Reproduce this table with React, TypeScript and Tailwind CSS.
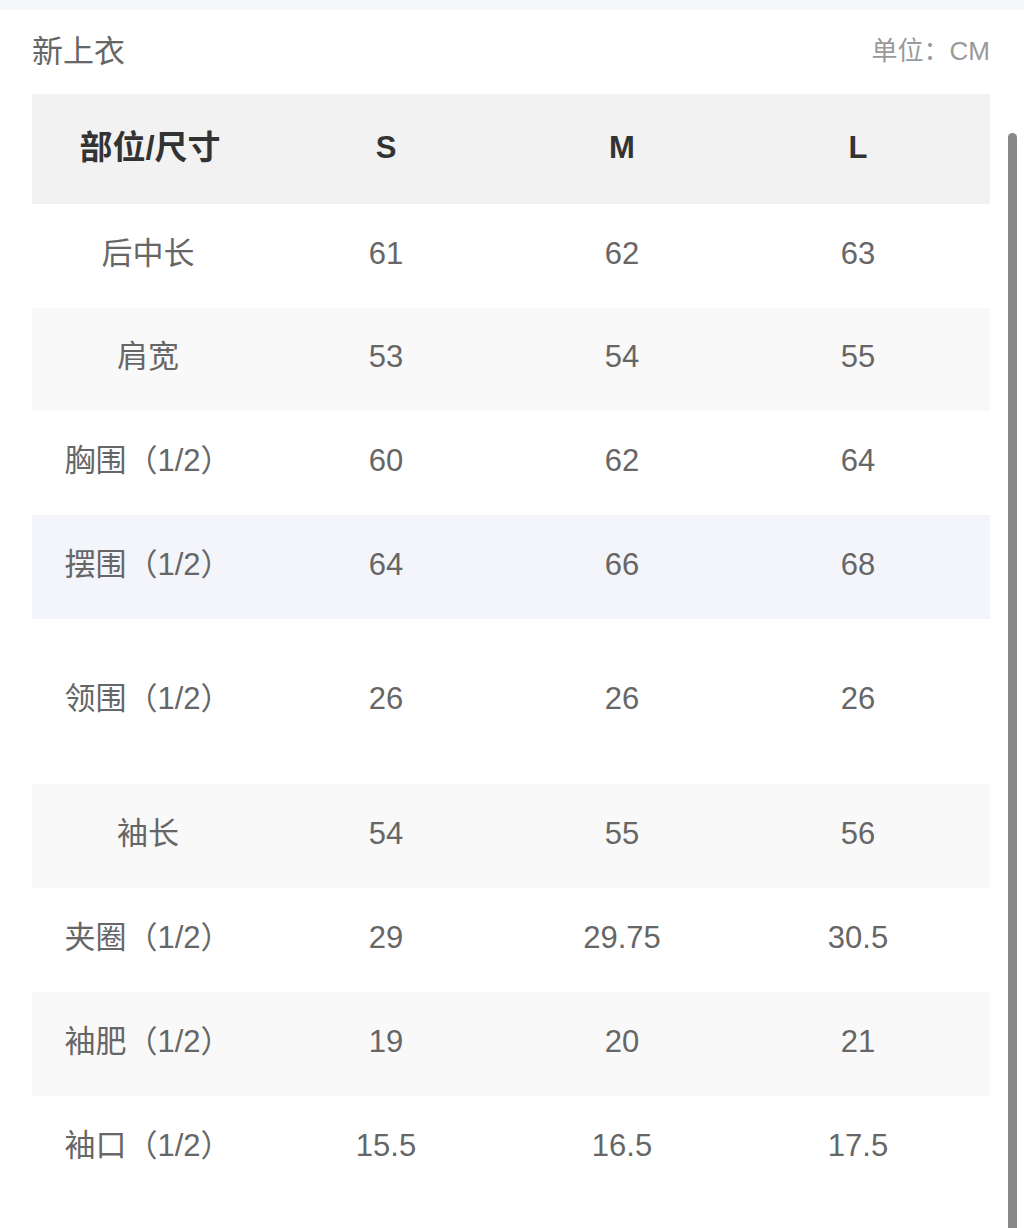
import React from "react";

const rows: { label: string; s: string; m: string; l: string; bg: string; h: string }[] = [
  { label: "后中长", s: "61", m: "62", l: "63", bg: "bg-white", h: "h-[104px]" },
  { label: "肩宽", s: "53", m: "54", l: "55", bg: "bg-[#f9f9f9]", h: "h-[103px]" },
  { label: "胸围（1/2）", s: "60", m: "62", l: "64", bg: "bg-white", h: "h-[104px]" },
  { label: "摆围（1/2）", s: "64", m: "66", l: "68", bg: "bg-[#f3f5fa]", h: "h-[104px]" },
  { label: "领围（1/2）", s: "26", m: "26", l: "26", bg: "bg-white", h: "h-[165px]" },
  { label: "袖长", s: "54", m: "55", l: "56", bg: "bg-[#f9f9f9]", h: "h-[104px]" },
  { label: "夹圈（1/2）", s: "29", m: "29.75", l: "30.5", bg: "bg-white", h: "h-[104px]" },
  { label: "袖肥（1/2）", s: "19", m: "20", l: "21", bg: "bg-[#f9f9f9]", h: "h-[104px]" },
  { label: "袖口（1/2）", s: "15.5", m: "16.5", l: "17.5", bg: "bg-white", h: "h-[104px]" },
];

const font = { fontFamily: '"Liberation Sans", "Noto Sans CJK SC", sans-serif' };

export default function App() {
  return (
    <div className="relative w-[1024px] h-[1228px] bg-white overflow-hidden" style={font}>
      <div className="h-[10px] bg-[#f5f8fb]" />
      <div className="flex items-center justify-between pl-[32px] pr-[34px] h-[84px] pb-[2px]">
        <span className="text-[31px] text-[#666] leading-none">新上衣</span>
        <span className="text-[26px] text-[#999] leading-none">单位：CM</span>
      </div>
      <div className="ml-[32px] w-[958px]">
        <div className="grid grid-cols-[236px_236px_236px_236px] h-[110px] items-center bg-[#f2f2f2] text-[31px] font-bold text-[#333] pb-[2px]">
          <div className="text-center text-[33px]">部位/尺寸</div>
          <div className="text-center">S</div>
          <div className="text-center">M</div>
          <div className="text-center">L</div>
        </div>
        {rows.map((r) => (
          <div
            key={r.label}
            className={`grid grid-cols-[236px_236px_236px_236px] items-center text-[31px] text-[#666] pb-[4px] ${r.bg} ${r.h}`}
          >
            <div className="text-center pr-[4px]">{r.label}</div>
            <div className="text-center">{r.s}</div>
            <div className="text-center">{r.m}</div>
            <div className="text-center">{r.l}</div>
          </div>
        ))}
      </div>
      <div className="absolute left-[1008px] top-[133px] w-[9px] h-[1200px] rounded-t-full bg-[#888]" />
    </div>
  );
}
